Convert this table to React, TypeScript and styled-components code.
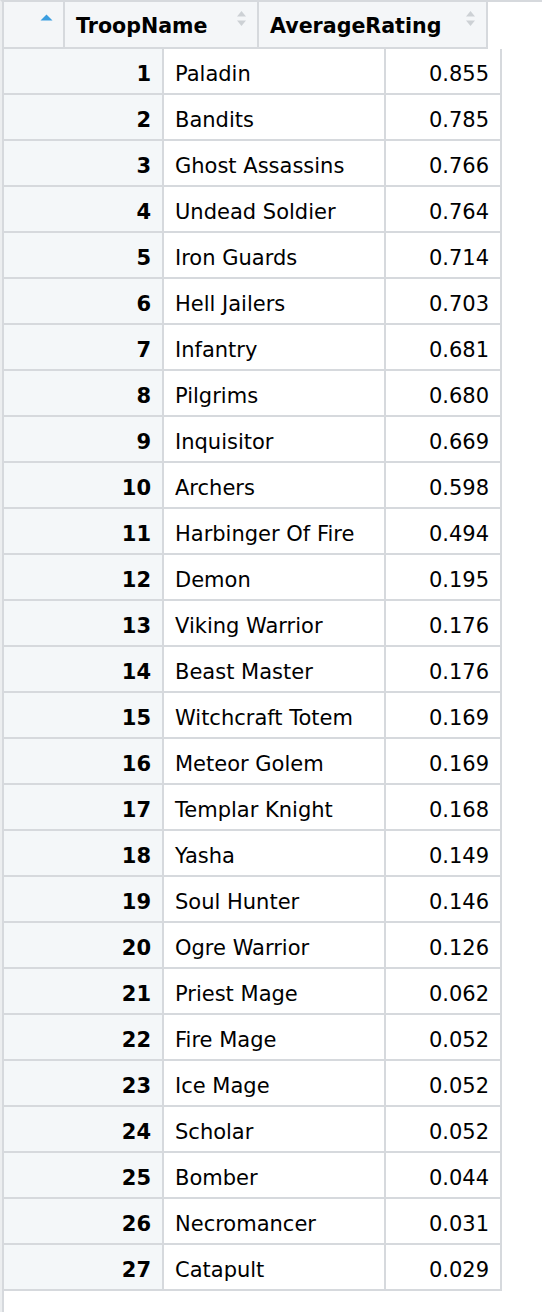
import React from "react";
import styled, { createGlobalStyle } from "styled-components";

const GlobalStyle = createGlobalStyle`
  html, body {
    margin: 0;
    padding: 0;
    background: #fff;
  }
  body {
    font-family: "DejaVu Sans", "Liberation Sans", sans-serif;
    color: #000;
  }
`;

const line = "#d6d9dd";

const Page = styled.div`
  min-height: 100vh;
  box-sizing: border-box;
  border-top: 2px solid ${line};
  border-left: 2px solid #eceef0;
`;

const Frame = styled.div`
  min-height: calc(100vh - 2px);
  box-sizing: border-box;
  border-left: 2px solid ${line};
`;

const HeaderRow = styled.div`
  display: flex;
  height: 47px;
`;

const HeadCell = styled.div<{ $w: number }>`
  width: ${(p) => p.$w}px;
  box-sizing: border-box;
  display: flex;
  justify-content: space-between;
  align-items: center;
  padding: 0 10px 0 11px;
  background: #f4f6f8;
  border-right: 2px solid ${line};
  border-bottom: 2px solid ${line};
  font-size: 20.6px;
  font-weight: bold;
`;

const HeadLabel = styled.span`
  padding-top: 2px;
`;

const IconSlot = styled.span`
  display: flex;
  align-self: flex-start;
  padding-top: 8px;
`;

const Row = styled.div`
  display: flex;
  height: 46px;
`;

const Cell = styled.div<{ $w: number; $align?: "left" | "right"; $shade?: boolean; $bold?: boolean }>`
  width: ${(p) => p.$w}px;
  box-sizing: border-box;
  display: flex;
  align-items: center;
  justify-content: ${(p) => (p.$align === "right" ? "flex-end" : "flex-start")};
  padding: 5px 11px 0 11px;
  background: ${(p) => (p.$shade ? "#f4f7f9" : "#fff")};
  border-right: 2px solid ${line};
  border-bottom: 2px solid ${line};
  font-size: 21px;
  font-weight: ${(p) => (p.$bold ? "bold" : "normal")};
  white-space: nowrap;
`;

const SortBoth = () => (
  <svg width="11" height="17" viewBox="0 0 11 17">
    <path d="M1 6.5 L5.5 1 L10 6.5 Z" fill="#cdd1d5" />
    <path d="M1 10.5 L5.5 16 L10 10.5 Z" fill="#cdd1d5" />
  </svg>
);

const SortAsc = () => (
  <svg width="13" height="7" viewBox="0 0 13 7" style={{ marginTop: 4 }}>
    <path d="M0.5 6.5 L6.5 0.5 L12.5 6.5 Z" fill="#3b9ee0" />
  </svg>
);

const rows: [string, string][] = [
  ["Paladin", "0.855"],
  ["Bandits", "0.785"],
  ["Ghost Assassins", "0.766"],
  ["Undead Soldier", "0.764"],
  ["Iron Guards", "0.714"],
  ["Hell Jailers", "0.703"],
  ["Infantry", "0.681"],
  ["Pilgrims", "0.680"],
  ["Inquisitor", "0.669"],
  ["Archers", "0.598"],
  ["Harbinger Of Fire", "0.494"],
  ["Demon", "0.195"],
  ["Viking Warrior", "0.176"],
  ["Beast Master", "0.176"],
  ["Witchcraft Totem", "0.169"],
  ["Meteor Golem", "0.169"],
  ["Templar Knight", "0.168"],
  ["Yasha", "0.149"],
  ["Soul Hunter", "0.146"],
  ["Ogre Warrior", "0.126"],
  ["Priest Mage", "0.062"],
  ["Fire Mage", "0.052"],
  ["Ice Mage", "0.052"],
  ["Scholar", "0.052"],
  ["Bomber", "0.044"],
  ["Necromancer", "0.031"],
  ["Catapult", "0.029"],
];

const App = () => {
  return (
    <>
      <GlobalStyle />
      <Page>
        <Frame>
          <HeaderRow>
            <HeadCell $w={61}>
              <span />
              <IconSlot>
                <SortAsc />
              </IconSlot>
            </HeadCell>
            <HeadCell $w={194}>
              <HeadLabel>TroopName</HeadLabel>
              <IconSlot>
                <SortBoth />
              </IconSlot>
            </HeadCell>
            <HeadCell $w={229}>
              <HeadLabel>AverageRating</HeadLabel>
              <IconSlot>
                <SortBoth />
              </IconSlot>
            </HeadCell>
          </HeaderRow>
          {rows.map(([name, rating], i) => (
            <Row key={name}>
              <Cell $w={160} $align="right" $shade $bold>
                {i + 1}
              </Cell>
              <Cell $w={222}>{name}</Cell>
              <Cell $w={116} $align="right">
                {rating}
              </Cell>
            </Row>
          ))}
        </Frame>
      </Page>
    </>
  );
};

export default App;
